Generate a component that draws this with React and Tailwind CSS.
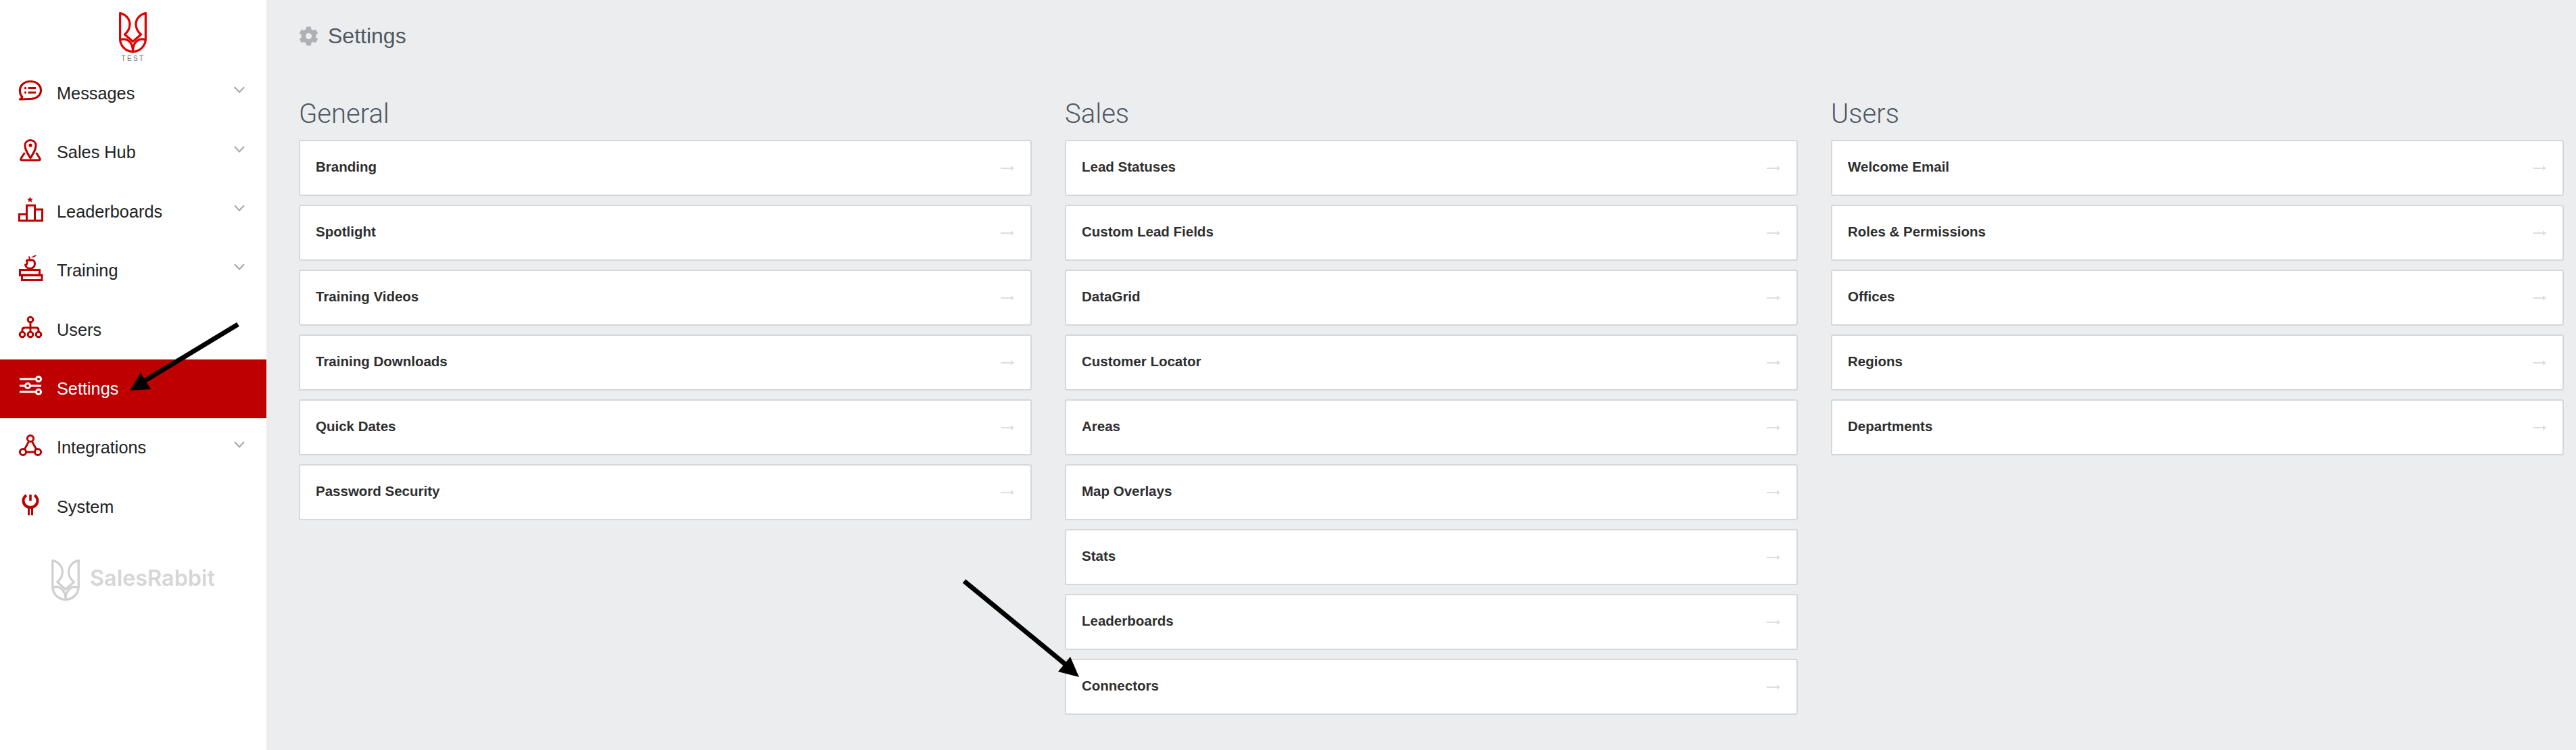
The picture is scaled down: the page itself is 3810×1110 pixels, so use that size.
import React from "react";
import { FaCog } from "react-icons/fa";

const RED = "#bd0000";

function Logo({ className, color }) {
  return (
    <svg viewBox="0 0 41 60" className={className} fill="none" stroke={color} strokeWidth="3.2" strokeLinejoin="round" strokeLinecap="round">
      <path d="M1.6 1.6 V39.5 A18.9 18.9 0 0 0 39.4 39.5 V1.6" />
      <path d="M1.6 1.6 C10 3 16 10 16 18 C16 24 13 29 8.5 33 L20.5 43.5 L32.5 33 C28 29 25 24 25 18 C25 10 31 3 39.4 1.6" />
      <path d="M2 41 C11 37 20.5 44 20.5 58 M39 41 C30 37 20.5 44 20.5 58" />
    </svg>
  );
}

const iconProps = { viewBox: "0 0 40 40", fill: "none", strokeWidth: 3, className: "w-10 h-10 mb-[9px] shrink-0" };

const icons = {
  Messages: (
    <svg {...iconProps} stroke={RED}>
      <path d="M4.5 33 C7 32 8 30.5 7.5 29 C5.5 27 4.5 24 4.5 20 C4.5 12 11 6.5 20 6.5 C29 6.5 35.5 12 35.5 19.5 C35.5 27 29 32.5 20 32.5 Z" strokeWidth="3.2" strokeLinejoin="round" />
      <path d="M16.5 16.5 H28 M16.5 23 H28" strokeWidth="3" />
      <circle cx="12.5" cy="16.5" r="1.7" fill={RED} stroke="none" />
      <circle cx="12.5" cy="23" r="1.7" fill={RED} stroke="none" />
    </svg>
  ),
  "Sales Hub": (
    <svg {...iconProps} stroke={RED}>
      <path d="M20 32 C15 24 12 19 12 13.5 C12 8.5 15.5 5.5 20 5.5 C24.5 5.5 28 8.5 28 13.5 C28 19 25 24 20 32 Z" strokeLinejoin="round" />
      <circle cx="20" cy="13" r="2.6" fill={RED} stroke="none" />
      <path d="M11.5 24 L6 32.5 Q5 35 7.5 35 L32.5 35 Q35 35 34 32.5 L28.5 24" strokeLinejoin="round" />
    </svg>
  ),
  Leaderboards: (
    <svg {...iconProps} stroke={RED}>
      <rect x="3.5" y="28" width="11" height="9.5" />
      <rect x="14.5" y="15" width="12" height="22.5" />
      <rect x="26.5" y="21" width="11" height="16.5" />
      <polygon points="19.5,2 20.8,5 24,5.2 21.5,7.3 22.4,10.5 19.5,8.7 16.6,10.5 17.5,7.3 15,5.2 18.2,5" fill={RED} stroke="none" />
    </svg>
  ),
  Training: (
    <svg {...iconProps} stroke={RED}>
      <path d="M14.5 9.5 C17 8 18 8.8 19.5 9.3 C21.5 8.5 26.5 8 26.5 14.5 C26.5 19 23 21.5 19.5 21.5 C15.5 21.5 13 18.5 12.5 16 C15 16 16 12.5 14.5 9.5 Z" strokeLinejoin="round" />
      <path d="M19 8.5 Q19 5.5 17.5 3.5" strokeWidth="2" />
      <path d="M21 5.5 Q24.5 1.5 29.5 1.5 Q27 5 21 5.5 Z" fill={RED} stroke="none" />
      <rect x="4.5" y="23.5" width="29" height="8" />
      <rect x="7.5" y="31" width="29.5" height="7.5" />
    </svg>
  ),
  Users: (
    <svg {...iconProps} stroke={RED}>
      <circle cx="20" cy="9" r="3.8" />
      <circle cx="8" cy="31" r="3.8" />
      <circle cx="20" cy="31" r="3.8" />
      <circle cx="32" cy="31" r="3.8" />
      <path d="M20 13 V27 M8 27 V24.5 Q8 21 11.5 21 H28.5 Q32 21 32 24.5 V27" />
    </svg>
  ),
  Settings: (
    <svg {...iconProps} stroke="#ffffff">
      <path d="M4 10 H27 M4 20 H11 M21 20 H36 M4 29 H27" />
      <circle cx="32" cy="10" r="3.6" />
      <circle cx="16" cy="20" r="3.6" />
      <circle cx="32" cy="29" r="3.6" />
    </svg>
  ),
  Integrations: (
    <svg {...iconProps} stroke={RED}>
      <circle cx="20" cy="10" r="4.6" />
      <circle cx="9" cy="30" r="4.6" />
      <circle cx="31" cy="30" r="4.6" />
      <path d="M17.8 14 L11.3 26 M22.2 14 L28.7 26 M13.6 30 H26.4" />
    </svg>
  ),
  System: (
    <svg {...iconProps} stroke={RED}>
      <path d="M14 7 C11 9 9.5 12 9.5 15 C9.5 20.5 14 25 20 25 C26 25 30.5 20.5 30.5 15 C30.5 12 29 9 26 7" strokeWidth="4" />
      <path d="M20 6 V15" strokeWidth="3.6" />
      <path d="M17.5 24 V36.5 M22.5 24 V36.5" strokeWidth="3" />
    </svg>
  ),
};

const nav = [
  ["Messages", true],
  ["Sales Hub", true],
  ["Leaderboards", true],
  ["Training", true],
  ["Users", false],
  ["Settings", false],
  ["Integrations", true],
  ["System", false],
];

const columns = [
  ["General", ["Branding", "Spotlight", "Training Videos", "Training Downloads", "Quick Dates", "Password Security"]],
  ["Sales", ["Lead Statuses", "Custom Lead Fields", "DataGrid", "Customer Locator", "Areas", "Map Overlays", "Stats", "Leaderboards", "Connectors"]],
  ["Users", ["Welcome Email", "Roles & Permissions", "Offices", "Regions", "Departments"]],
];

function NavRow({ label, chevron }) {
  const active = label === "Settings";
  return (
    <div className={`flex items-center h-[87.4px] pl-[25px] pr-[32px] ${active ? "bg-[#bd0000] text-white" : "text-[#222222]"}`}>
      {icons[label]}
      <span className="ml-[19px] text-[25.3px] leading-none flex-1">{label}</span>
      {chevron && (
        <svg viewBox="0 0 16 10" fill="none" stroke="#a6a6a6" strokeWidth="2" className="w-[16px] h-[10px] mb-[11px]">
          <path d="M1 1 L8 8.5 L15 1" />
        </svg>
      )}
    </div>
  );
}

function Card({ label }) {
  return (
    <div className="flex items-center justify-between h-[83px] mb-[13px] pl-[23px] pr-[24px] bg-white border-2 border-[#d6d7d9] rounded-[3px]">
      <span className="text-[20.5px] font-bold text-[#2e2e2e] mb-[2px]">{label}</span>
      <svg viewBox="0 0 20 10" fill="none" className="w-[20px] h-[10px]">
        <path d="M0 5 H17" stroke="#dedede" strokeWidth="2" />
        <path d="M15 1 L20 5 L15 9 Z" fill="#dedede" />
      </svg>
    </div>
  );
}

export default function App() {
  return (
    <div className="relative flex h-[1110px] w-[3810px] overflow-hidden bg-[#ecedef] font-['Liberation_Sans',sans-serif]">
      <aside className="w-[394px] shrink-0 bg-white flex flex-col">
        <div className="h-[95px] flex flex-col items-center pt-[18px] shrink-0">
          <Logo className="w-[41px] h-[60px] ml-[-1px]" color="#e00000" />
          <span className="text-[10px] leading-none tracking-[2.4px] text-[#777777] mt-[4px]">TEST</span>
        </div>
        {nav.map(([label, chevron]) => (
          <NavRow key={label} label={label} chevron={chevron} />
        ))}
        <div className="flex items-center mt-[34px] pl-[76px]">
          <Logo className="w-[42px] h-[61px]" color="#d0d0d0" />
          <span className="ml-[15px] text-[32.4px] leading-none font-semibold text-[#d6d6d6] font-['Inter',sans-serif] mt-[-4px]">SalesRabbit</span>
        </div>
      </aside>
      <main className="flex-1 pl-[48px] pr-[18px]">
        <header className="h-[106px] flex items-center">
          <FaCog className="w-[29px] h-[29px] text-[#aeb0b5]" />
          <h1 className="ml-[14px] text-[32px] leading-none text-[#4e5862]">Settings</h1>
        </header>
        <div className="grid grid-cols-3 gap-x-[49px]">
          {columns.map(([title, items]) => (
            <section key={title}>
              <h2 className="mt-[40px] mb-[15px] h-[46px] text-[40px] leading-[46px] font-light font-['Roboto',sans-serif] text-[#4e5862]">{title}</h2>
              {items.map((item) => (
                <Card key={item} label={item} />
              ))}
            </section>
          ))}
        </div>
      </main>
      <svg className="absolute inset-0 w-[3810px] h-[1110px] pointer-events-none" viewBox="0 0 3810 1110">
        <path d="M352 480 L215 563" stroke="#000000" strokeWidth="7" />
        <polygon points="192,578 208,552 223,576" fill="#000000" />
        <path d="M1426 860 L1578 985" stroke="#000000" strokeWidth="7" />
        <polygon points="1596,1002 1583,972 1565,994" fill="#000000" />
      </svg>
    </div>
  );
}
